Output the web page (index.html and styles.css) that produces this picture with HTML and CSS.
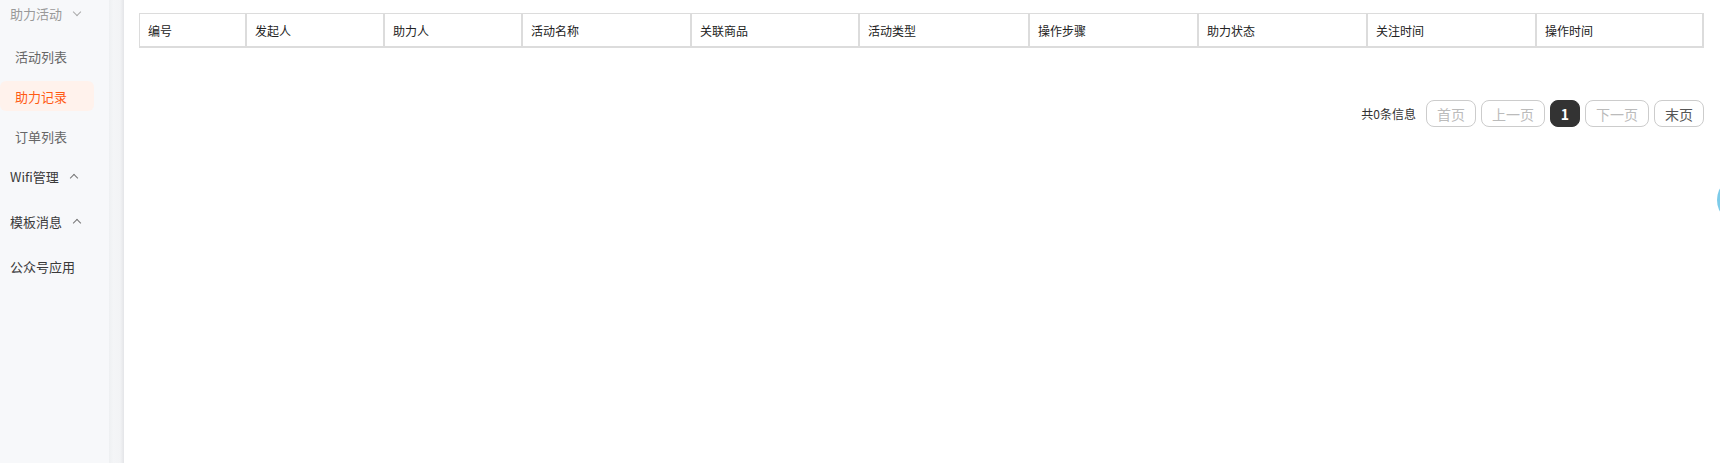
FILE: index.html
```html
<!DOCTYPE html>
<html lang="zh-CN">
<head>
    <meta charset="UTF-8">
    <title>助力记录</title>
    <link rel="stylesheet" href="styles.css">
</head>
<body>
    <div class="layout">
        <aside class="sidebar">
            <div class="menu-group muted">助力活动 <span class="arrow down"></span></div>
            <div class="submenu">
                <div class="menu-item">活动列表</div>
                <div class="menu-item active">助力记录</div>
                <div class="menu-item">订单列表</div>
            </div>
            <div class="menu-group">Wifi管理 <span class="arrow up"></span></div>
            <div class="menu-group">模板消息 <span class="arrow up"></span></div>
            <div class="menu-group">公众号应用</div>
        </aside>
        <div class="scroll-strip"></div>
        <main class="content">
            <table class="records">
                <colgroup>
                    <col style="width:105px">
                    <col style="width:138px">
                    <col style="width:138px">
                    <col style="width:169px">
                    <col style="width:168px">
                    <col style="width:170px">
                    <col style="width:169px">
                    <col style="width:169px">
                    <col style="width:169px">
                    <col style="width:167px">
                </colgroup>
                <thead>
                    <tr>
                        <th>编号</th>
                        <th>发起人</th>
                        <th>助力人</th>
                        <th>活动名称</th>
                        <th>关联商品</th>
                        <th>活动类型</th>
                        <th>操作步骤</th>
                        <th>助力状态</th>
                        <th>关注时间</th>
                        <th>操作时间</th>
                    </tr>
                </thead>
            </table>
            <div class="pager">
                <span class="total">共0条信息</span>
                <a class="page-btn disabled">首页</a>
                <a class="page-btn disabled">上一页</a>
                <a class="page-btn current">1</a>
                <a class="page-btn disabled">下一页</a>
                <a class="page-btn">末页</a>
            </div>
        </main>
    </div>
    <div class="float-btn"></div>
</body>
</html>
```

FILE: styles.css
```css
body {
    margin: 0;
    padding: 0;
    font-family: "Noto Sans CJK SC", "Noto Sans", sans-serif;
    background: #fff;
    overflow: hidden;
}
.layout {
    display: flex;
    height: 463px;
}
.sidebar {
    width: 109px;
    flex-shrink: 0;
    background: #f7f8fa;
    padding-top: 1px;
    box-sizing: border-box;
}
.menu-group {
    display: flex;
    align-items: center;
    height: 45px;
    padding-left: 10px;
    font-size: 13px;
    color: #3a3a3a;
}
.menu-group.muted {
    height: 24px;
    color: #999;
    margin-bottom: 16px;
}
.submenu {
    display: flex;
    flex-direction: column;
    gap: 10px;
    margin-bottom: 3px;
}
.menu-item {
    display: flex;
    align-items: center;
    height: 30px;
    width: 94px;
    box-sizing: border-box;
    padding-left: 15px;
    font-size: 13px;
    color: #666;
    border-radius: 6px;
}
.menu-item.active {
    background: #fff2ec;
    color: #ff5a14;
}
.arrow {
    display: inline-block;
    width: 5px;
    height: 5px;
    border-left: 1px solid #777;
    border-top: 1px solid #777;
    margin-left: 12px;
}
.arrow.up {
    transform: rotate(45deg);
    margin-top: 3px;
}
.arrow.down {
    transform: rotate(225deg);
    margin-top: -3px;
    border-color: #aaa;
}
.scroll-strip {
    width: 15px;
    flex-shrink: 0;
    background: linear-gradient(to right, #eef0f2, #f4f5f7 30%, #f2f3f5 75%, #e4e5e8);
}
.content {
    flex: 1;
    padding: 13px 0 0 15px;
}
.records {
    width: 1565px;
    table-layout: fixed;
    border-collapse: separate;
    border-spacing: 0;
    border-top: 1px solid #dcdcdc;
    border-left: 1px solid #dcdcdc;
    border-right: 2px solid #dcdcdc;
    border-bottom: 2px solid #dcdcdc;
    box-sizing: border-box;
}
.records th {
    height: 32px;
    padding: 0 0 0 8px;
    text-align: left;
    font-size: 12px;
    font-weight: normal;
    color: #222;
}
.records th + th {
    border-left: 2px solid #dcdcdc;
}
.pager {
    display: flex;
    justify-content: flex-end;
    align-items: center;
    gap: 5px;
    width: 1565px;
    margin-top: 52px;
}
.total {
    font-size: 12px;
    color: #333;
    margin-right: 5px;
}
.page-btn {
    display: flex;
    align-items: center;
    justify-content: center;
    height: 27px;
    padding: 0 10px;
    box-sizing: border-box;
    border: 1px solid #ccc;
    border-radius: 8px;
    font-size: 14px;
    color: #555;
}
.page-btn.disabled {
    color: #bbb;
}
.page-btn.current {
    width: 30px;
    padding: 0;
    background: #333;
    border-color: #333;
    color: #fff;
    font-weight: bold;
}
.float-btn {
    position: fixed;
    left: 1717px;
    top: 175px;
    width: 50px;
    height: 50px;
    border-radius: 50%;
    background: #7ccbe9;
}
```
